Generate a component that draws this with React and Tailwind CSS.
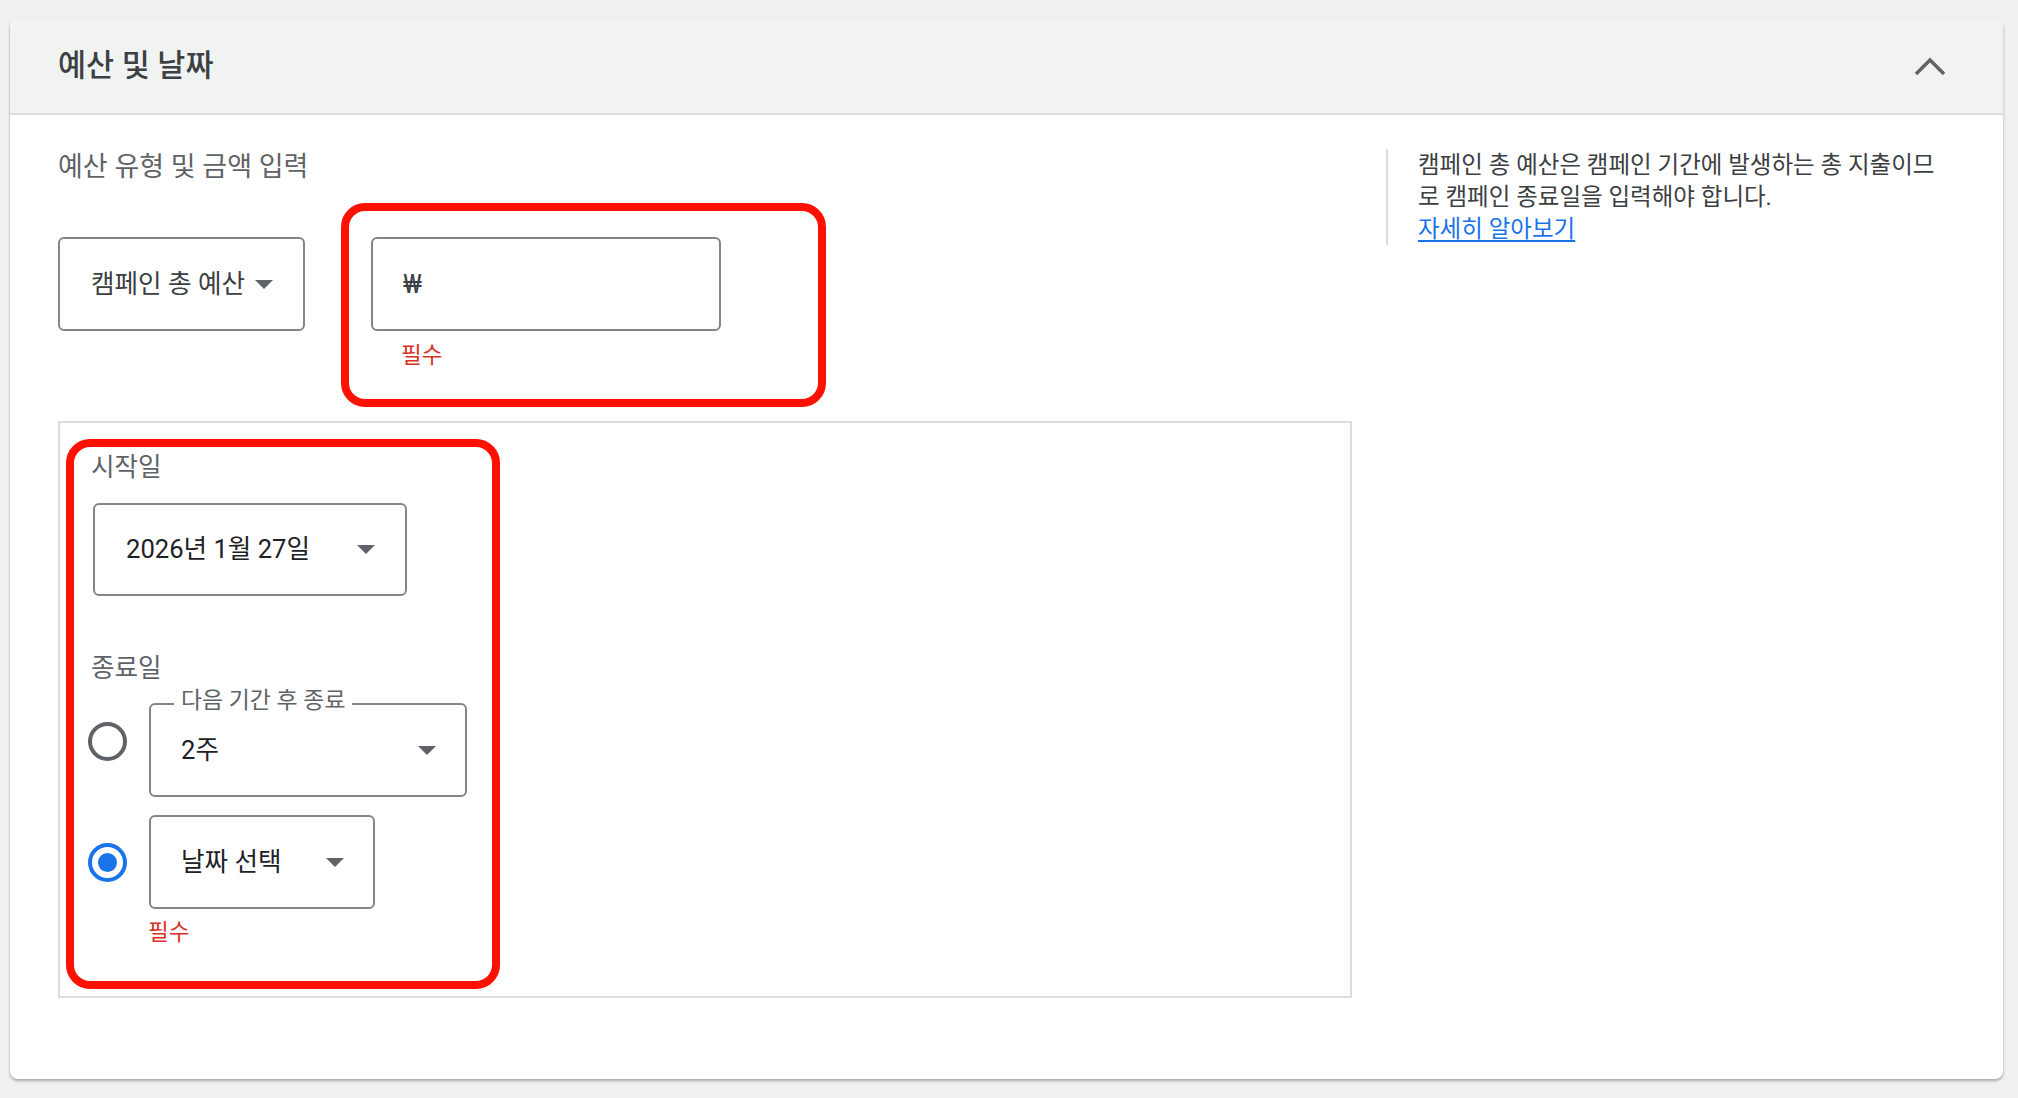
import { useState } from "react"

const Caret = () => (
    <svg width="18" height="9" viewBox="0 0 18 9" className="shrink-0">
        <polygon points="0,0 18,0 9,9" fill="#5f6368" />
    </svg>
)

const Radio = ({ checked }) => (
    <div
        className={
            checked
                ? "w-[39px] h-[39px] rounded-full border-[4px] border-[#1a73e8] flex items-center justify-center shrink-0"
                : "w-[39px] h-[39px] rounded-full border-[4px] border-[#5f6368] shrink-0"
        }
    >
        {checked && <div className="w-[19px] h-[19px] rounded-full bg-[#1a73e8]" />}
    </div>
)

const App = () => {
    const [endMode] = useState("date")

    return (
        <div className="min-h-screen bg-[#eef0f1] pt-[18px] pl-[10px] pr-[15px] font-['Roboto','Noto_Sans_CJK_KR',sans-serif]">
            <div className="h-[1061px] rounded-[8px] bg-white shadow-[0_2px_3px_rgba(0,0,0,0.3)] overflow-hidden">
                {/* header */}
                <div className="h-[97px] bg-[#f1f3f3] border-b-2 border-[#dadce0] flex items-center justify-between pl-[48px] pr-[57px]">
                    <div className="text-[30.5px] font-medium text-[#3c4043]">
                        예산 및 날짜
                    </div>
                    <svg width="32" height="20" viewBox="0 0 32 20">
                        <polyline points="2,18 16,4 30,18" fill="none" stroke="#5f6368" strokeWidth="3.5" />
                    </svg>
                </div>

                {/* body */}
                <div className="flex pl-[48px] pt-[34px]">
                    <div className="w-[1294px] shrink-0">
                        <div className="text-[27px] leading-[36px] text-[#5f6368]">
                            예산 유형 및 금액 입력
                        </div>

                        <div className="flex items-start mt-[52px]">
                            <div className="w-[247px] h-[94px] border-2 border-[#80868b] rounded-[6px] flex items-center pl-[31px] gap-[10px] text-[25.6px] text-[#3c4043]">
                                <span>캠페인 총 예산</span>
                                <Caret />
                            </div>

                            <div className="relative ml-[66px]">
                                <div className="w-[350px] h-[94px] border-2 border-[#80868b] rounded-[6px] flex items-center pl-[30px] text-[25.6px] text-[#3c4043]">
                                    ₩
                                </div>
                                <div className="mt-[10px] pl-[30px] text-[22.5px] leading-[28px] text-[#d93025]">
                                    필수
                                </div>
                                <div className="absolute -left-[30px] -top-[34px] w-[485px] h-[204px] border-[8px] border-[#fe1100] rounded-[24px] pointer-events-none" />
                            </div>
                        </div>

                        <div className="relative mt-[52px] h-[577px] border-2 border-[#dadce0] pl-[31px] pt-[26px]">
                            <div className="text-[25.6px] leading-[36px] text-[#5f6368]">시작일</div>
                            <div className="mt-[18px] ml-[2px] w-[314px] h-[93px] border-2 border-[#80868b] rounded-[6px] flex items-center justify-between pl-[31px] pr-[30px] text-[25.6px] text-[#202124]">
                                <span>2026년 1월 27일</span>
                                <Caret />
                            </div>

                            <div className="mt-[54px] text-[25.6px] leading-[36px] text-[#5f6368]">종료일</div>

                            <div className="flex items-center -ml-[3px]">
                                <Radio checked={endMode === "duration"} />
                                <div className="ml-[22px] pt-[17px]">
                                    <div className="relative w-[318px] h-[94px] border-2 border-[#80868b] rounded-[6px] flex items-center justify-between pl-[30px] pr-[29px] text-[25.6px] text-[#202124]">
                                        <span className="absolute left-[23px] -top-[18px] px-[7px] bg-white text-[22.9px] leading-[28px] text-[#5f6368]">
                                            다음 기간 후 종료
                                        </span>
                                        <span>2주</span>
                                        <Caret />
                                    </div>
                                </div>
                            </div>

                            <div className="flex items-center -ml-[3px] mt-[18px]">
                                <Radio checked={endMode === "date"} />
                                <div className="ml-[22px] w-[226px] h-[94px] border-2 border-[#80868b] rounded-[6px] flex items-center justify-between pl-[30px] pr-[29px] text-[25.6px] text-[#202124]">
                                    <span>날짜 선택</span>
                                    <Caret />
                                </div>
                            </div>
                            <div className="ml-[57px] mt-[9px] text-[22.5px] leading-[28px] text-[#d93025]">필수</div>

                            <div className="absolute left-[6px] top-[16px] w-[434px] h-[550px] border-[8px] border-[#fe1100] rounded-[24px] pointer-events-none" />
                        </div>
                    </div>

                    <div className="ml-[34px] self-start border-l-2 border-[#dadce0] pl-[30px] w-[566px] text-[23.5px] leading-[32px] text-[#3c4043]">
                        <p className="pr-[8px]">
                            캠페인 총 예산은 캠페인 기간에 발생하는 총 지출이므로 캠페인 종료일을 입력해야 합니다.
                        </p>
                        <a href="#" className="text-[#1a73e8] underline underline-offset-[3px]">
                            자세히 알아보기
                        </a>
                    </div>
                </div>
            </div>
        </div>
    )
}

export default App
